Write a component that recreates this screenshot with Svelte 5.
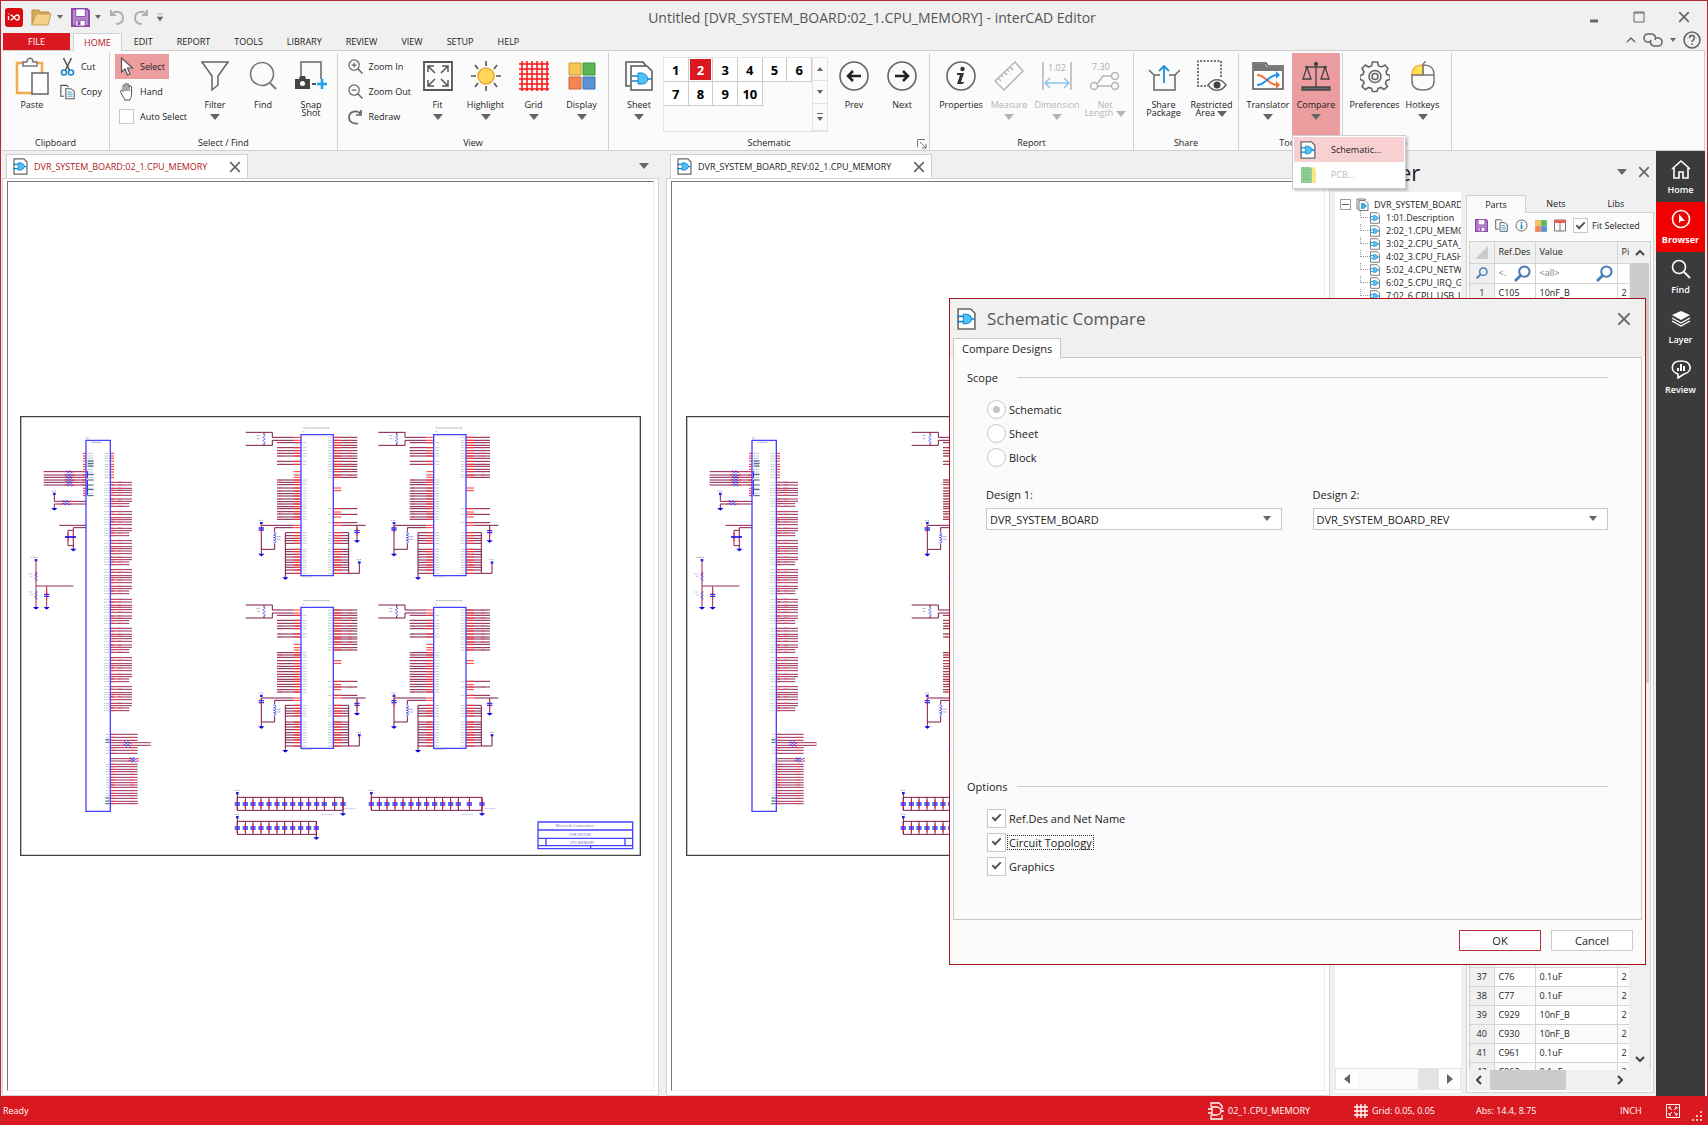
<script>
  const menuTabs = ['HOME', 'EDIT', 'REPORT', 'TOOLS', 'LIBRARY', 'REVIEW', 'VIEW', 'SETUP', 'HELP'];
  const sheets = [1, 2, 3, 4, 5, 6, 7, 8, 9, 10];

  const treeItems = [
    '1:01.Description',
    '2:02_1.CPU_MEMORY',
    '3:02_2.CPU_SATA_PCI',
    '4:02_3.CPU_FLASH',
    '5:02_4.CPU_NETWORK',
    '6:02_5.CPU_IRQ_GPIO',
    '7:02_6.CPU_USB_UART'
  ];

  const parts = {
    1: ['C105', '10nF_B'],
    37: ['C76', '0.1uF'],
    38: ['C77', '0.1uF'],
    39: ['C929', '10nF_B'],
    40: ['C930', '10nF_B'],
    41: ['C961', '0.1uF'],
    42: ['C962', '0.1uF']
  };
  const rows = Array.from({ length: 42 }, (_, i) => i + 1);

  const sideItems = ['Home', 'Browser', 'Find', 'Layer', 'Review'];

  let sheet = $state(2);
  let scope = $state('Schematic');
  let options = $state([
    { name: 'Ref.Des and Net Name', on: true },
    { name: 'Circuit Topology', on: true },
    { name: 'Graphics', on: true }
  ]);

  // schematic drawing, three units per pixel
  const busGroups = [199, 287, 374, 461, 550, 637, 725, 812];
  const busWires = [0, 8, 18, 24, 31, 39, 50, 57, 64, 72];
  const lowWires = [955, 964, 973, 995, 1003, 1012, 1045, 1052, 1060, 1067, 1075, 1084, 1092, 1100, 1107, 1114, 1124, 1132, 1139, 1147, 1156, 1163];
  const topPins = [112, 120, 127, 135, 145, 152, 160, 168, 177, 185];
  const leftWires = [167, 177, 184, 192, 199, 207];
  const memLeft = [83, 98, 107, 115, 123, 139, 148, 195, 202, 209, 219, 228, 236, 243, 252, 260, 267, 275, 281, 290, 297, 306, 313];
  const memRight = [67, 76, 83, 91, 98, 107, 115, 123, 130, 139, 148, 154, 163, 170, 180, 187, 281, 298, 323];
  const memStubs = [219, 227, 291, 306];
  const memPower = [353, 362, 370, 377, 385, 403, 410, 418, 426, 435, 442, 450, 457, 465, 475];
  const memChips = [[630, -3], [1028, -3], [630, 515], [1028, 515]];
  const banks = [
    { x: 652, y: 1144, w: 317, caps: [0, 24, 47, 71, 95, 119, 142, 166, 190, 214, 238, 261, 292, 317] },
    { x: 1054, y: 1144, w: 332, caps: [0, 24, 47, 71, 95, 119, 142, 166, 190, 214, 238, 261, 294, 332] },
    { x: 652, y: 1216, w: 237, caps: [0, 24, 47, 71, 95, 119, 142, 166, 190, 214, 237] }
  ];

  const hlines = (ys, x1, x2) => ys.map((y) => `M${x1} ${y}H${x2}`).join('');
</script>

{#snippet sheetIcon(w, h)}
  <svg width={w} height={h} viewBox="0 0 18 21" fill="none">
    <path d="M1 1h12l4 4v15H1z" fill="#fff" stroke="#666" stroke-width="1.5" />
    <path d="M0 8h6M0 13h6M13 10.500h4" stroke="#1787c8" stroke-width="1.500" />
    <path d="M6 6h2.500c3 0 5 2 5.500 4.500-.500 2.500-2.500 4.500-5.500 4.500H6z" fill="#4fc3f7" stroke="#1787c8" />
  </svg>
{/snippet}

{#snippet arrow()}
  <svg class="arrow" width="10" height="6" viewBox="0 0 10 6"><path d="M0 0h10L5 6z" fill="currentColor" /></svg>
{/snippet}

{#snippet smallArrow()}
  <svg width="6" height="4" viewBox="0 0 6 4"><path d="M0 0h6L3 4z" fill="#666" /></svg>
{/snippet}

{#snippet cross(size)}
  <svg width={size} height={size} viewBox="0 0 10 10"><path d="M1 1l8 8M9 1L1 9" stroke="#666" stroke-width="1.400" /></svg>
{/snippet}

{#snippet floppy(size)}
  <svg width={size} height={size} viewBox="0 0 20 20">
    <path d="M1 1h16l2 2v16H1z" fill="#b985d0" stroke="#8a4aa8" stroke-width="2" />
    <path d="M5 1h10v8H5zM5 13h10v6H5z" fill="#fff" stroke="#8a4aa8" />
    <path d="M7 14h3v4H7z" fill="#8a4aa8" />
  </svg>
{/snippet}

{#snippet copyIcon(size)}
  <svg width={size} height={size} viewBox="0 0 18 18" fill="none">
    <path d="M5 14H1V1h7l2 2" stroke="#555" stroke-width="1.300" />
    <path d="M7 5h6l4 3v9H7z" fill="#fff" stroke="#555" stroke-width="1.300" />
    <path d="M9 9h5M9 11.500h6M9 14h6" stroke="#1787c8" />
  </svg>
{/snippet}

{#snippet colorTiles(size)}
  <svg width={size} height={size} viewBox="0 0 28 28">
    <path d="M1 1h12v12H1z" fill="#f4c755" stroke="#c79d33" />
    <path d="M15 1h12v12H15z" fill="#5cb658" stroke="#3d9339" />
    <path d="M1 15h12v12H1z" fill="#f58553" stroke="#cc6234" />
    <path d="M15 15h12v12H15z" fill="#5a93d4" stroke="#3b72b0" />
  </svg>
{/snippet}

{#snippet magnifier(size, color, sign)}
  <svg width={size} height={size} viewBox="0 0 16 16" fill="none" stroke={color} stroke-width="1.300">
    <circle cx="6.500" cy="6.500" r="5.500" /><path d="M10.500 10.500l5 5" stroke-width="1.600" />
    {#if sign}<path d={sign === '+' ? 'M4 6.500h5M6.500 4v5' : 'M4 6.500h5'} />{/if}
  </svg>
{/snippet}

{#snippet blueLens(size)}
  <svg width={size} height={size} viewBox="0 0 18 18" fill="none" stroke="#4a7db8">
    <circle cx="11" cy="7" r="5.500" stroke-width="2.200" /><path d="M7 11l-6 6" stroke-width="3" />
  </svg>
{/snippet}

{#snippet ground(x, y)}
  <path d="M{x - 9} {y - 4}h18l-6 6h-2l-1 4-1-4h-2z" fill="#00e" />
{/snippet}

{#snippet power(x, y)}
  <path d="M{x - 4} {y - 4}h8v7h-8z" fill="#22e" />
  <path d="M{x - 8} {y - 9}h14" stroke="#99c" stroke-width="3" stroke-dasharray="3 2" />
{/snippet}

{#snippet cap(x, y)}
  <path d="M{x} {y - 12}v24" stroke="#f22" stroke-width="3" />
  <path d="M{x - 8} {y - 3}h16M{x - 8} {y + 3}h16" stroke="#33e" stroke-width="4" />
{/snippet}

{#snippet zigzag(x, y)}
  <path d="M{x - 16} {y}h6m20 0h8" stroke="#f33" stroke-width="3" />
  <path d="M{x - 10} {y}l3-4 5 8 5-8 5 8 3-4" stroke="#33e" stroke-width="2" fill="none" />
{/snippet}

{#snippet vzigzag(x, y)}
  <path d="M{x} {y - 13}l4 3-8 5 8 5-8 5 8 5-4 3" stroke="#44e" stroke-width="2" fill="none" />
{/snippet}

{#snippet schematic()}
  <svg class="schematic" width="621" height="440" viewBox="0 0 1863 1320" fill="none" stroke-width="3">
    <path d="M2 2h1859v1316H2z" fill="#fff" stroke="#444" stroke-width="4" />

    <!-- processor -->
    {#each busGroups as top}
      <path d={hlines(busWires.slice(0, 8).map((y) => y + top), 271, 336)} stroke="#9c2c5c" />
      <path d={hlines(busWires.slice(8).map((y) => y + top), 271, 328)} stroke="#9c2c5c" />
      <path d={hlines(busWires.map((y) => y + top), 271, 282)} stroke="#f33" />
      <path d={hlines(busWires.map((y) => y + top), 252, 268)} stroke="#c0ccdc" stroke-dasharray="5 1" />
      <path d={hlines(busWires.map((y) => y + top - 1), 293, 305)} stroke="#d55" stroke-width="2" />
    {/each}
    <path d={hlines(lowWires, 271, 353)} stroke="#9c2c5c" />
    <path d={hlines([980, 988], 271, 392)} stroke="#9c2c5c" />
    <path d={hlines([1028, 1035], 271, 345)} stroke="#9c2c5c" />
    <path d={hlines(lowWires, 271, 283)} stroke="#f33" />
    <path d={hlines(lowWires, 332, 342)} stroke="#e44" stroke-width="2" />
    <path d={hlines(lowWires, 258, 268)} stroke="#c0ccdc" />
    <path d={hlines([971, 979, 1146, 1155, 1163], 256, 269)} stroke="#368" />
    {@render zigzag(321, 980)}{@render zigzag(321, 988)}
    {@render zigzag(339, 1028)}{@render zigzag(339, 1035)}
    <path d={hlines(topPins, 271, 282) + hlines([...topPins.slice(0, 7), 217, 225, 232, 239], 189, 198)} stroke="#f22" />
    <path d={hlines([...topPins, 217, 232], 202, 220) + hlines(topPins, 254, 268)} stroke="#b0bccc" stroke-dasharray="5 1" />
    <path d={hlines([135, 142, 150, 175, 192, 207, 221, 239], 203, 221)} stroke="#357" />
    <path d={hlines(leftWires, 71, 198)} stroke="#8c1c50" />
    <path d={hlines(leftWires, 186, 198)} stroke="#f33" />
    {#each leftWires as y}{@render zigzag(147, y)}{/each}
    <path d="M103 236v20h95M103 278v-14h95" stroke="#8c1c50" />
    {@render zigzag(138, 256)}{@render zigzag(138, 264)}
    {@render power(103, 234)}{@render ground(103, 280)}
    <path d="M118 328h80M198 335h-38v65M160 343h-16v46h16" stroke="#8c1c50" />
    <path d="M144 350v26M160 350v26" stroke="#f33" />
    <path d="M135 363h33" stroke="#11e" stroke-width="5" />
    {@render ground(160, 402)}
    <path d="M48 435v140M48 510h112M80 510v65" stroke="#9c2c5c" />
    <path d="M48 466v12M80 520v12" stroke="#f33" />
    {@render power(48, 433)}
    {@render vzigzag(48, 482)}{@render vzigzag(48, 538)}
    {@render cap(80, 538)}
    {@render ground(48, 577)}{@render ground(80, 577)}
    <path d="M25 474h12M30 481h8M25 528h12M30 536h8M30 424h14" stroke="#aad" stroke-width="2" />
    <path d="M198 73h73v1113h-73z" stroke="#44f" stroke-width="4" />
    <path d="M215 79h30M198 66h8" stroke="#99d" stroke-dasharray="5 1" />
    <path d="M202 165v22M202 192v46" stroke="#11e" />

    <!-- memory chips -->
    {#each memChips as [x, y]}
      <g transform="translate({x} {y})">
        <path d={hlines(memLeft, 141, 213) + hlines(memRight, 310, 382) + hlines(memPower, 166, 213) + hlines(memPower, 310, 356)} stroke="#7c1848" />
        <path d={hlines([67, 76, ...memLeft, 170, 180, 187, 331, 338, ...memPower], 191, 213)} stroke="#f33" />
        <path d={hlines([...memRight, ...memStubs, 331, ...memPower], 310, 334)} stroke="#f33" />
        <path d={hlines(memLeft, 146, 155) + hlines(memRight, 355, 366)} stroke="#d44" stroke-width="2" />
        <path d={hlines([...memLeft, ...memPower], 218, 230) + hlines([...memRight, ...memPower], 294, 306)} stroke="#c0ccdc" />
        <path d="M47 52h80v15h64M47 91h80V76h64M102 52v8M102 84v7" stroke="#7c1848" />
        <path d="M191 331H94v88M191 338h-57v12M134 386v17H94M166 353v138M356 353v122h32v-32M334 331h73M381 331v48" stroke="#7c1848" />
        {@render vzigzag(102, 72)}
        <path d="M131 352c8 0 8 8 0 8 8 0 8 8 0 8 8 0 8 8 0 8 8 0 8 8 0 8" stroke="#33e" />
        <path d="M140 365h12M140 373h12M79 62h10M81 71h8" stroke="#aad" />
        {@render cap(94, 342)}{@render cap(381, 350)}
        {@render power(94, 325)}{@render power(388, 443)}
        {@render ground(94, 420)}{@render ground(166, 491)}{@render ground(381, 380)}
        <path d="M213 59h97v423h-97z" stroke="#44f" stroke-width="4" />
        <path d="M220 39h80" stroke="#aaa" stroke-dasharray="6 2" />
        <path d="M217 50h7M213 485h34" stroke="#aac" stroke-width="2" />
      </g>
    {/each}

    <!-- decoupling capacitors -->
    {#each banks as b}
      <path d="M{b.x} {b.y - 12}v12h{b.w}v50M{b.x} {b.y}v39h{b.w}" stroke="#7c1848" />
      {#each b.caps as c}
        <path d="M{b.x + c} {b.y}v39" stroke="#7c1848" />
        {@render cap(b.x + c, b.y + 20)}
      {/each}
      {@render power(b.x, b.y - 12)}
      {@render ground(b.x + b.w, b.y + 52)}
    {/each}
    <path d="M905 1195h35M972 1178h35M1325 1195h35M1392 1178h35" stroke="#aad" stroke-width="2" stroke-dasharray="6 1" />

    <!-- title block -->
    <path d="M1554 1218h284v80h-284zM1554 1242h284M1554 1267h284M1554 1289h284M1578 1267v22M1815 1267v22M1712 1289v9" stroke="#44f" stroke-width="4" />
    <g class="block-text">
      <text x="1664" y="1234">Microsoft Corporation</text>
      <text x="1680" y="1260">DVR SYSTEM</text>
      <text x="1686" y="1284">CPU MEMORY</text>
    </g>
  </svg>
{/snippet}

<div class="window">
  <header class="titlebar">
    <div class="quick">
      <svg width="18" height="19" viewBox="0 0 18 19">
        <rect width="18" height="19" rx="3" fill="#d90b12" />
        <path d="M3.500 8v4M3.500 5.500v1M5.500 12c3 0 4-5 6.500-5 3 0 3 5 0 5-2.500 0-3.500-5-6.500-5" fill="none" stroke="#fff" stroke-width="1.300" />
      </svg>
      <button aria-label="Open">
        <svg width="21" height="18" viewBox="0 0 21 18">
          <path d="M1 17V2h7l2 2h8v3" fill="#d9a95c" stroke="#b98a45" />
          <path d="M1 17l4-11h15l-3 11z" fill="#f5d08b" stroke="#c79a52" />
        </svg>
        {@render smallArrow()}
      </button>
      <button aria-label="Save">{@render floppy(19)}{@render smallArrow()}</button>
      <button aria-label="Undo">
        <svg width="16" height="16" viewBox="0 0 16 16" fill="none" stroke="#b0b0b0" stroke-width="2"><path d="M2 1v5h5M2 6c3-5 12-4 12 3 0 4-3 6-7 6" /></svg>
      </button>
      <button aria-label="Redo">
        <svg width="16" height="16" viewBox="0 0 16 16" fill="none" stroke="#b0b0b0" stroke-width="2"><path d="M14 1v5H9M14 6C11 1 2 2 2 9c0 4 3 6 7 6" /></svg>
      </button>
      <button aria-label="Customize">
        <svg width="6" height="8" viewBox="0 0 6 8"><path d="M0 1h6M0 4h6L3 8z" fill="#666" stroke="#666" stroke-width=".5" /></svg>
      </button>
    </div>
    <h1>Untitled [DVR_SYSTEM_BOARD:02_1.CPU_MEMORY] - interCAD Editor</h1>
    <div class="winbuttons">
      <button aria-label="Minimize"><svg width="12" height="12" viewBox="0 0 12 12"><path d="M2 10h8" stroke="#666" stroke-width="3" /></svg></button>
      <button aria-label="Maximize"><svg width="12" height="12" viewBox="0 0 12 12"><path d="M1 1h10v10H1zM1 2h10" fill="none" stroke="#666" /></svg></button>
      <button aria-label="Close">{@render cross(12)}</button>
    </div>
  </header>

  <nav class="tabs">
    <button class="file">FILE</button>
    {#each menuTabs as tab}
      <button class:active={tab === 'HOME'}>{tab}</button>
    {/each}
    <div class="tab-tools">
      <svg width="10" height="6" viewBox="0 0 10 6" fill="none" stroke="#666" stroke-width="1.400"><path d="M1 5l4-4 4 4" /></svg>
      <svg width="20" height="14" viewBox="0 0 20 14" fill="none" stroke="#666" stroke-width="1.600">
        <path d="M7 9H5a4 4 0 010-8h4a4 4 0 013 6" /><path d="M13 5h2a4 4 0 010 8h-4a4 4 0 01-3-6" />
      </svg>
      {@render smallArrow()}
      <svg width="18" height="18" viewBox="0 0 18 18" fill="none" stroke="#666" stroke-width="1.600">
        <circle cx="9" cy="9" r="8" /><path d="M6.500 7c0-3.500 5-3.500 5 0 0 1.800-2.500 1.800-2.500 4M9 12.500v1.500" />
      </svg>
    </div>
  </nav>

  <div class="ribbon">
    <section class="group">
      <div class="tools">
        <button class="big">
          <svg width="34" height="38" viewBox="0 0 34 38" fill="none">
            <path d="M2 6h25v30H2z" fill="#fff" stroke="#f0ac4e" stroke-width="2.500" />
            <path d="M8 9V5h4c0-5 6-5 6 0h4v4z" fill="#fff" stroke="#777" stroke-width="1.500" />
            <path d="M17 16h16v21H17z" fill="#fff" stroke="#666" stroke-width="1.500" />
          </svg>
          <span>Paste</span>
        </button>
        <div class="smalls">
          <button class="small">
            <svg width="14" height="19" viewBox="0 0 14 19" fill="none">
              <path d="M3 1l6 12M11 1L5 13" stroke="#555" stroke-width="1.600" />
              <circle cx="3.500" cy="15.500" r="2.500" stroke="#1a86c8" stroke-width="1.600" /><circle cx="10.500" cy="15.500" r="2.500" stroke="#1a86c8" stroke-width="1.600" />
            </svg>Cut
          </button>
          <button class="small">{@render copyIcon(16)}Copy</button>
        </div>
      </div>
      <h2>Clipboard</h2>
    </section>

    <section class="group">
      <div class="tools">
        <div class="smalls select-col">
          <button class="small on">
            <svg width="14" height="19" viewBox="0 0 14 19"><path d="M2 1v14l3.500-3 2.500 6 2.500-1-2.500-6H13z" fill="#fff" stroke="#555" stroke-width="1.200" /></svg>Select
          </button>
          <button class="small">
            <svg width="14" height="19" viewBox="0 0 14 19"><path d="M3 14L1 9.500c0-1.500 1.500-1.500 2.500 0V4c0-1.500 2-1.500 2 0V2.500c0-1.500 2-1.500 2 0V3c0-1.500 2-1.500 2 0v2c0-1.500 2.500-1.500 2.500 0v7c0 3-1 4-1.500 6H5c0-2-1-2.500-2-4zM5.500 4v5M7.500 3v6M9.500 4v5" fill="#fff" stroke="#555" /></svg>Hand
          </button>
          <label class="small"><input type="checkbox" class="check" />Auto Select</label>
        </div>
        <button class="big">
          <svg width="28" height="30" viewBox="0 0 28 30" fill="none" stroke="#666" stroke-width="1.500"><path d="M1 1h26L17 15v9l-6 5V15z" /></svg>
          <span>Filter</span>{@render arrow()}
        </button>
        <button class="big">
          <svg width="28" height="30" viewBox="0 0 28 30" fill="none" stroke="#777" stroke-width="1.600"><circle cx="13" cy="13" r="11.500" /><path d="M21 22l6 6" stroke-width="2" /></svg>
          <span>Find</span>
        </button>
        <button class="big">
          <svg width="32" height="30" viewBox="0 0 32 30" fill="none">
            <path d="M6 17V1h20v17" stroke="#666" stroke-width="1.500" />
            <path d="M0 18h4l1-3h5l1 3h4v10H0z" fill="#444" /><circle cx="7.500" cy="22.500" r="2.500" fill="#fff" />
            <path d="M17 23h4" stroke="#555" stroke-width="2" /><path d="M27 18v10M22 23h10" stroke="#1e9fe8" stroke-width="2.500" />
          </svg>
          <span>Snap<br />Shot</span>
        </button>
      </div>
      <h2>Select / Find</h2>
    </section>

    <section class="group">
      <div class="tools">
        <div class="smalls view-col">
          <button class="small">{@render magnifier(15, '#666', '+')}Zoom In</button>
          <button class="small">{@render magnifier(15, '#666', '-')}Zoom Out</button>
          <button class="small"><svg width="15" height="16" viewBox="0 0 15 16" fill="none" stroke="#666" stroke-width="1.700"><path d="M13 1v5H8M13 6C10 0 1 2 1 8.500 1 13 5 15 10 14.500" /></svg>Redraw</button>
        </div>
        <button class="big">
          <svg width="30" height="30" viewBox="0 0 30 30" fill="none" stroke="#555" stroke-width="1.800">
            <path d="M1 1h28v28H1z" /><path d="M12 12L5 5m0 6V5h6M18 12l7-7m-6 0h6v6M12 18l-7 7m0-6v6h6M18 18l7 7m-6 0h6v-6" stroke-width="1.500" />
          </svg>
          <span>Fit</span>{@render arrow()}
        </button>
        <button class="big">
          <svg width="30" height="30" viewBox="0 0 30 30">
            <path d="M15 0v5M15 25v5M0 15h5M25 15h5M4 4l3 4M26 4l-3 4M4 26l3-4M26 26l-3-4" stroke="#555" stroke-width="1.600" />
            <circle cx="15" cy="15" r="8" fill="#ffd95a" stroke="#f0a93a" stroke-width="1.600" />
          </svg>
          <span>Highlight</span>{@render arrow()}
        </button>
        <button class="big">
          <svg width="30" height="30" viewBox="0 0 30 30"><path d="M3 0v30M8 0v30M13 0v30M18 0v30M23 0v30M28 0v30M0 3h30M0 8h30M0 13h30M0 18h30M0 23h30M0 28h30" stroke="#fa1414" stroke-width="1.500" /></svg>
          <span>Grid</span>{@render arrow()}
        </button>
        <button class="big">{@render colorTiles(28)}<span>Display</span>{@render arrow()}</button>
      </div>
      <h2>View</h2>
    </section>

    <section class="group">
      <div class="tools">
        <button class="big">
          <svg width="28" height="30" viewBox="0 0 28 30" fill="none">
            <path d="M5 25H1V1h17l3 4" stroke="#555" stroke-width="1.500" />
            <path d="M6 5h16l5 5v19H6z" fill="#fff" stroke="#555" stroke-width="1.500" />
            <path d="M7 15h7M7 20h7M22 18h5" stroke="#1787c8" stroke-width="1.500" />
            <path d="M13 12h4c4 1 5 3 6 6-1 3-2 5-6 5h-4z" fill="#4fc3f7" stroke="#1787c8" />
          </svg>
          <span>Sheet</span>{@render arrow()}
        </button>
        <div class="gallery">
          <div class="cells">
            {#each sheets as n}
              <button class:current={n === sheet} onclick={() => (sheet = n)}>{n}</button>
            {/each}
          </div>
          <div class="scrollers">
            <button aria-label="Up"><svg width="6" height="4" viewBox="0 0 6 4"><path d="M0 4h6L3 0z" fill="#666" /></svg></button>
            <button aria-label="Down">{@render smallArrow()}</button>
            <button aria-label="More"><svg width="6" height="8" viewBox="0 0 6 8"><path d="M0 0h6v1H0zM0 4h6L3 8z" fill="#666" /></svg></button>
          </div>
        </div>
        <button class="big">
          <svg width="30" height="30" viewBox="0 0 30 30" fill="none" stroke="#666" stroke-width="1.600"><circle cx="15" cy="15" r="14" /><path d="M22 15H9m5-5l-5 5 5 5" stroke="#222" stroke-width="2.500" /></svg>
          <span>Prev</span>
        </button>
        <button class="big">
          <svg width="30" height="30" viewBox="0 0 30 30" fill="none" stroke="#666" stroke-width="1.600"><circle cx="15" cy="15" r="14" /><path d="M8 15h13m-5-5l5 5-5 5" stroke="#222" stroke-width="2.500" /></svg>
          <span>Next</span>
        </button>
      </div>
      <h2>Schematic</h2>
      <svg class="launcher" width="10" height="10" viewBox="0 0 10 10" fill="none" stroke="#777"><path d="M.5 8V.5H8M3 3l6 6M9 5v4H5" /></svg>
    </section>

    <section class="group">
      <div class="tools">
        <button class="big">
          <svg width="30" height="30" viewBox="0 0 30 30"><circle cx="15" cy="15" r="14" fill="none" stroke="#666" stroke-width="1.600" /><circle cx="16.500" cy="8" r="2.200" fill="#333" /><path d="M11 12h7l-3 9h3l-1 2h-6l3-9h-3z" fill="#333" /></svg>
          <span>Properties</span>
        </button>
        <button class="big" disabled>
          <svg width="30" height="30" viewBox="0 0 30 30" fill="none" stroke="#b5b5b5" stroke-width="1.500"><path d="M1 20L21 1l8 9L10 29zM4 17l3 3M7 14l2 2M10 11l3 3M13 8.500l2 2M16 6l3 3" /></svg>
          <span>Measure</span>{@render arrow()}
        </button>
        <button class="big" disabled>
          <svg width="30" height="30" viewBox="0 0 30 30" fill="none">
            <path d="M1 1v28M29 1v28" stroke="#b5b5b5" stroke-width="1.500" /><path d="M3 22h24M8 17l-5 5 5 5M22 17l5 5-5 5" stroke="#8ac4e8" stroke-width="1.500" />
            <text x="15" y="10" class="digits">1.02</text>
          </svg>
          <span>Dimension</span>{@render arrow()}
        </button>
        <button class="big" disabled>
          <svg width="32" height="30" viewBox="0 0 32 30" fill="none" stroke="#b5b5b5" stroke-width="1.500">
            <circle cx="5" cy="25" r="3.500" /><circle cx="26" cy="15" r="3.500" /><circle cx="26" cy="25" r="3.500" /><path d="M8 23l6-8h8M9 25h13" />
            <text x="12" y="9" class="digits">7.30</text>
          </svg>
          <span>Net<br />Length {@render arrow()}</span>
        </button>
      </div>
      <h2>Report</h2>
    </section>

    <section class="group">
      <div class="tools">
        <button class="big">
          <svg width="32" height="30" viewBox="0 0 32 30" fill="none" stroke="#666" stroke-width="1.500"><path d="M1 9l5 5v15h21V14l5-5M6 14h6M21 14h6" /><path d="M16 22V5m-5 5l5-5 5 5" stroke="#1e8fd0" stroke-width="1.800" /></svg>
          <span>Share<br />Package</span>
        </button>
        <button class="big">
          <svg width="30" height="32" viewBox="0 0 30 32" fill="none">
            <path d="M24 17V1H1v25h10" stroke="#444" stroke-width="1.500" stroke-dasharray="2 1.500" />
            <path d="M11 25c5-7 13-7 18 0-5 7-13 7-18 0z" fill="#fff" stroke="#666" stroke-width="1.500" /><circle cx="20" cy="25" r="3.500" fill="#444" />
          </svg>
          <span>Restricted<br />Area {@render arrow()}</span>
        </button>
      </div>
      <h2>Share</h2>
    </section>

    <section class="group">
      <div class="tools">
        <button class="big">
          <svg width="32" height="30" viewBox="0 0 32 30" fill="none">
            <path d="M1 28V2h13l2 3h15v23z" fill="#fff" stroke="#555" stroke-width="1.500" /><path d="M2 3h11l2 3h15v4H2z" fill="#777" />
            <path d="M5 14c9 0 11 10 20 10" stroke="#f37132" stroke-width="1.800" /><path d="M5 24c9 0 11-10 20-10" stroke="#1e95e8" stroke-width="1.800" />
            <path d="M24 20l4 4-4 4z" fill="#f37132" /><path d="M24 10l4 4-4 4z" fill="#1e95e8" />
          </svg>
          <span>Translator</span>{@render arrow()}
        </button>
        <div class="dropdown">
          <button class="big on">
            <svg width="30" height="30" viewBox="0 0 30 30" fill="none" stroke="#444" stroke-width="1.300">
              <path d="M15 1v25M4 6h22M6 6L2 18h8zM24 6l-4 12h8z" /><circle cx="15" cy="3" r="1.500" fill="#444" /><path d="M1 26h28v3H1z" fill="#666" />
            </svg>
            <span>Compare</span>{@render arrow()}
          </button>
          <div class="menu">
            <button class="hover">{@render sheetIcon(16, 18)}Schematic...</button>
            <button disabled>
              <svg width="16" height="18" viewBox="0 0 16 18"><path d="M7 1h6l3 3v13H7z" fill="#f7e884" /><path d="M1 1h9l2 2v14H1z" fill="#8fcf93" /><path d="M3 4h7M3 7h7M3 10h7M3 13h7" stroke="#7bbd80" /></svg>PCB...
            </button>
          </div>
        </div>
      </div>
      <h2>Tools</h2>
    </section>

    <section class="group">
      <div class="tools">
        <button class="big">
          <svg width="30" height="30" viewBox="0 0 30 30" fill="none" stroke="#666" stroke-width="1.600">
            <path d="M12.500 1h5l1 4 3 1 3.500-2 3 3.500-2 3.500 1 2.500 3 1v4l-3.500 1-1 3 2 3-3.500 3-3-2-3 1-1 3h-4.500l-1-3-3-1-3 2-3.500-3 2-3.500-1-2.500-3-1v-4l3-1 1-3-2-3 3.500-3.500L8.500 6l3-1z" />
            <circle cx="15" cy="15.500" r="6" /><circle cx="15" cy="15.500" r="3" />
          </svg>
          <span>Preferences</span>
        </button>
        <button class="big">
          <svg width="26" height="32" viewBox="0 0 26 32" fill="none" stroke="#777" stroke-width="1.500">
            <path d="M2 15c0-7 3-10 11-10v10z" fill="#ffe14d" stroke="#f0ac4e" />
            <path d="M13 5c8 0 11 3 11 10v6c0 6-3 9-11 9S2 27 2 21v-6h22M13 5c-1-2 3-2 2-4M13 5v10" />
          </svg>
          <span>Hotkeys</span>{@render arrow()}
        </button>
      </div>
      <h2>Help</h2>
    </section>
  </div>

  <main>
    <section class="doc">
      <div class="doctabs">
        <div class="doctab active">{@render sheetIcon(15, 17)}<span>DVR_SYSTEM_BOARD:02_1.CPU_MEMORY</span><button aria-label="Close tab">{@render cross(12)}</button></div>
        <button class="doclist" aria-label="Open documents">{@render arrow()}</button>
      </div>
      <div class="frame"><div class="canvas">{@render schematic()}</div></div>
    </section>

    <section class="doc">
      <div class="doctabs">
        <div class="doctab">{@render sheetIcon(15, 17)}<span>DVR_SYSTEM_BOARD_REV:02_1.CPU_MEMORY</span><button aria-label="Close tab">{@render cross(12)}</button></div>
      </div>
      <div class="frame"><div class="canvas">{@render schematic()}</div></div>
    </section>

    <aside class="browser">
      <div class="browser-head">
        <h2>Browser</h2>
        {@render arrow()}
        <button aria-label="Close browser">{@render cross(12)}</button>
      </div>
      <div class="browser-body">
        <div class="tree">
          <ul>
            <li class="root">
              <svg width="11" height="11" viewBox="0 0 11 11"><path d="M.5.5h10v10H.5z" fill="#fff" stroke="#999" /><path d="M2 5.500h7" stroke="#468" /></svg>
              <svg width="13" height="13" viewBox="0 0 13 13" fill="none"><path d="M2 11H1V1h8l1 1M3 2.500h6l3 3v7H3z" fill="#fff" stroke="#777" /><path d="M5 5h3l3 3-3 3H5z" fill="#3fa9e0" /></svg>
              DVR_SYSTEM_BOARD
            </li>
            {#each treeItems as item}
              <li>{@render sheetIcon(10, 12)}{item}</li>
            {/each}
          </ul>
          <div class="hscroll">
            <button aria-label="Scroll left"><svg width="6" height="10" viewBox="0 0 6 10"><path d="M6 0v10L0 5z" fill="#666" /></svg></button>
            <div class="track"><div class="thumb"></div></div>
            <button aria-label="Scroll right"><svg width="6" height="10" viewBox="0 0 6 10"><path d="M0 0v10l6-5z" fill="#666" /></svg></button>
          </div>
        </div>

        <div class="parts">
          <div class="part-tabs">
            <button class="active">Parts</button>
            <button>Nets</button>
            <button>Libs</button>
          </div>
          <div class="part-body">
            <div class="part-tools">
              {@render floppy(13)}
              {@render copyIcon(13)}
              <svg width="13" height="13" viewBox="0 0 13 13" fill="none"><circle cx="6.500" cy="6.500" r="5.500" stroke="#666" /><path d="M6.500 3v1.500M6.500 5.500V10" stroke="#1787c8" stroke-width="1.600" /></svg>
              {@render colorTiles(12)}
              <svg width="12" height="13" viewBox="0 0 12 13" fill="none"><path d="M.5 1h11v11H.5zM6 4v8" stroke="#777" /><path d="M0 1h12v3H0z" fill="#f05a5a" /></svg>
              <label><input type="checkbox" class="check" checked />Fit Selected</label>
            </div>
            <div class="grid">
              <div class="grid-clip">
                <table>
                  <thead>
                    <tr><th class="num"><svg width="13" height="13" viewBox="0 0 13 13"><path d="M13 0v13H0z" fill="#ccc" /></svg></th><th>Ref.Des</th><th>Value</th><th>Pi</th></tr>
                  </thead>
                  <tbody>
                    <tr class="filter">
                      <td class="num">{@render blueLens(12)}</td>
                      <td><div>&lt;.{@render blueLens(17)}</div></td>
                      <td><div>&lt;all&gt;{@render blueLens(17)}</div></td>
                      <td></td>
                    </tr>
                    {#each rows as n}
                      <tr class:alt={n % 2 === 0}>
                        <td class="num">{parts[n] ? n : ''}</td>
                        <td>{parts[n]?.[0] ?? ''}</td>
                        <td>{parts[n]?.[1] ?? ''}</td>
                        <td>{parts[n] ? 2 : ''}</td>
                      </tr>
                    {/each}
                  </tbody>
                </table>
              </div>
              <div class="vscroll">
                <svg width="10" height="6" viewBox="0 0 10 6" fill="none" stroke="#444" stroke-width="2"><path d="M1 5l4-4 4 4" /></svg>
                <div class="vthumb"></div>
                <svg width="10" height="6" viewBox="0 0 10 6" fill="none" stroke="#444" stroke-width="2"><path d="M1 1l4 4 4-4" /></svg>
              </div>
            </div>
            <div class="gscroll">
              <svg width="6" height="10" viewBox="0 0 6 10" fill="none" stroke="#444" stroke-width="2"><path d="M5 1L1 5l4 4" /></svg>
              <div class="gtrack"><div class="gthumb"></div></div>
              <svg width="6" height="10" viewBox="0 0 6 10" fill="none" stroke="#444" stroke-width="2"><path d="M1 1l4 4-4 4" /></svg>
            </div>
          </div>
        </div>
      </div>
    </aside>

    <nav class="side">
      {#each sideItems as item}
        <button class:active={item === 'Browser'}>
          <svg width="22" height="20" viewBox="0 0 22 20" fill="none" stroke="#fff" stroke-width="1.600">
            {#if item === 'Home'}
              <path d="M2 10l9-8 9 8M4 9v10h5v-6h4v6h5V9" />
            {:else if item === 'Browser'}
              <circle cx="11" cy="10" r="8.500" /><path d="M9 5v9l2-2h4z" fill="#fff" stroke="none" />
            {:else if item === 'Find'}
              <circle cx="9" cy="8" r="6.500" /><path d="M14 13l6 6" stroke-width="2" />
            {:else if item === 'Layer'}
              <path d="M11 2l9 4-9 5-9-5z" fill="#fff" stroke="none" /><path d="M2 9l9 5 9-5M2 12l9 5 9-5" stroke-width="1.400" />
            {:else}
              <path d="M8 15c-8-2-8-13 3-13s12 11 3 13l-6 4z" /><path d="M8 12V9M11 12V5M14 12V7" stroke-width="2" />
            {/if}
          </svg>
          {item}
        </button>
      {/each}
    </nav>
  </main>

  <footer>
    <span class="ready">Ready</span>
    <span class="status page">
      <svg width="16" height="18" viewBox="0 0 16 18" fill="none" stroke="#fff" stroke-width="1.300"><path d="M3 5V1h8l3 3v3M3 13v4h11v-4M0 7h4M0 11h4M13 9h3M4 5h4c3 0 5 2 5 4s-2 4-5 4H4z" /></svg>
      02_1.CPU_MEMORY
    </span>
    <span class="status coords">
      <svg width="14" height="14" viewBox="0 0 14 14"><path d="M3 0v14M7 0v14M11 0v14M0 3h14M0 7h14M0 11h14" stroke="#fff" stroke-width="1.300" /></svg>
      Grid: 0.05, 0.05
    </span>
    <span class="status abs">Abs: 14.4, 8.75</span>
    <span class="status unit">INCH</span>
    <svg width="14" height="14" viewBox="0 0 14 14" fill="none" stroke="#fff"><path d="M.5.5h13v13H.5zM3 3l3 3M11 3L8 6M3 11l3-3M11 11L8 8M3 5V3h2M9 3h2v2M3 9v2h2M9 11h2V9" /></svg>
    <svg class="grip" width="10" height="10" viewBox="0 0 10 10" fill="#f3c0c0"><path d="M8 0h2v2H8zM8 4h2v2H8zM8 8h2v2H8zM4 4h2v2H4zM4 8h2v2H4zM0 8h2v2H0z" /></svg>
  </footer>

  <div class="dialog" role="dialog" aria-labelledby="dialog-title">
    <header>
      {@render sheetIcon(19, 22)}
      <h2 id="dialog-title">Schematic Compare</h2>
      <button aria-label="Close dialog">{@render cross(14)}</button>
    </header>
    <div class="dialog-tabs"><button>Compare Designs</button></div>
    <div class="dialog-body">
      <div class="legend"><span>Scope</span><hr /></div>
      <div class="choices">
        {#each ['Schematic', 'Sheet', 'Block'] as name}
          <label><input type="radio" name="scope" value={name} bind:group={scope} /><span>{name}</span></label>
        {/each}
      </div>
      <div class="designs">
        <div>
          <label for="design1">Design 1:</label>
          <div class="select"><select id="design1"><option>DVR_SYSTEM_BOARD</option></select></div>
        </div>
        <div>
          <label for="design2">Design 2:</label>
          <div class="select"><select id="design2"><option>DVR_SYSTEM_BOARD_REV</option></select></div>
        </div>
      </div>
      <div class="legend"><span>Options</span><hr /></div>
      <div class="choices">
        {#each options as option}
          <label><input type="checkbox" class="check" bind:checked={option.on} /><span class:focused={option.name === 'Circuit Topology'}>{option.name}</span></label>
        {/each}
      </div>
    </div>
    <div class="actions">
      <button class="ok">OK</button>
      <button>Cancel</button>
    </div>
  </div>
</div>

<style>
  :global(body) {
    margin: 0;
    background: #f0f0f0;
  }

  .window {
    position: relative;
    display: flex;
    flex-direction: column;
    height: 100vh;
    min-height: 980px;
    box-sizing: border-box;
    border: 1px solid #b02830;
    border-bottom: 0;
    overflow: hidden;
    background: #f0f0f0;
    color: #222;
    font-family: "Open Sans", "Segoe UI", sans-serif;
    font-size: 9px;
  }

  button {
    padding: 0;
    border: 0;
    background: none;
    color: inherit;
    font: inherit;
  }

  h1, h2 {
    margin: 0;
    font-size: 9px;
    font-weight: normal;
  }

  svg {
    flex: none;
    display: block;
  }

  /* title bar */
  .titlebar {
    display: grid;
    grid-template-columns: 200px 1fr 164px;
    align-items: center;
    height: 32px;
  }

  .titlebar h1 {
    text-align: center;
    font-size: 14px;
    color: #555;
  }

  .quick {
    display: flex;
    align-items: center;
    gap: 8px;
    padding-left: 4px;
  }

  .quick button {
    display: flex;
    align-items: center;
    gap: 5px;
  }

  .winbuttons {
    display: flex;
    justify-content: flex-end;
    gap: 33px;
    padding-right: 17px;
  }

  .tabs {
    display: flex;
    height: 17px;
    padding-left: 2px;
  }

  .tabs button {
    padding: 0 12px;
  }

  .tabs .file {
    width: 67px;
    margin-right: 3px;
    background: #d9181f;
    color: #fff;
  }

  .tabs .active {
    position: relative;
    height: 18px;
    padding: 0 10px;
    border: 1px solid #d0d0d0;
    border-bottom: 0;
    background: #fbfbfb;
    color: #b3151c;
  }

  .tab-tools {
    display: flex;
    align-items: center;
    gap: 7px;
    margin-left: auto;
    margin-bottom: 3px;
    padding-right: 6px;
  }

  /* ribbon */
  .ribbon {
    display: grid;
    grid-template-columns: 108px 228px 271px 321px 204px 105px 104px 109px;
    height: 99px;
    margin: 0 2px 0 1px;
    border: 1px solid #d0d0d0;
    border-left: 0;
    background: #fbfbfb;
  }

  .group {
    position: relative;
    margin: 2px 0;
    border-right: 1px solid #d0d0d0;
  }

  .group h2 {
    line-height: 15px;
    text-align: center;
  }

  .tools {
    display: flex;
    justify-content: center;
    height: 82px;
    padding-left: 3px;
  }

  .big {
    display: flex;
    flex-direction: column;
    align-items: center;
    width: 48px;
    height: 82px;
    padding-top: 4px;
    line-height: 8px;
    white-space: nowrap;
  }

  .big > svg:first-child {
    height: 38px;
    margin-bottom: 6px;
  }

  .big > .arrow {
    margin-top: 5px;
  }

  .arrow {
    color: #666;
  }

  .big span .arrow {
    display: inline-block;
    vertical-align: middle;
  }

  .big:disabled, .big:disabled .arrow {
    color: #b5b5b5;
  }

  .digits {
    font-size: 9px;
    fill: #aaa;
    stroke: none;
    text-anchor: middle;
  }

  .on {
    background: #eb9da0;
  }

  .smalls {
    display: flex;
    flex-direction: column;
    align-items: flex-start;
    padding-top: 1px;
  }

  .small {
    display: flex;
    align-items: center;
    gap: 6px;
    height: 25px;
    padding: 0 4px;
    white-space: nowrap;
  }

  .small svg {
    width: 15px;
  }

  .select-col {
    width: 76px;
  }

  .view-col {
    width: 70px;
  }

  .check {
    appearance: none;
    display: grid;
    place-items: center;
    width: 15px;
    height: 15px;
    margin: 0;
    box-sizing: border-box;
    border: 1px solid #c8c8c8;
    background: #fff;
  }

  .check:checked::before {
    content: "";
    width: 7px;
    height: 3px;
    margin-bottom: 3px;
    border: solid #555;
    border-width: 0 0 2px 2px;
    transform: rotate(-45deg);
  }

  .gallery {
    display: flex;
    width: 163px;
    height: 73px;
    margin: 4px 2px 0 0;
    border: 1px solid #e4e4e4;
  }

  .cells {
    flex: 1;
    display: grid;
    grid-template-columns: repeat(6, 1fr);
    grid-auto-rows: 24px;
  }

  .cells button {
    border: 1px solid #ccc;
    border-width: 0 1px 1px 0;
    background: #fff;
    color: #000;
    font-size: 13px;
    font-weight: bold;
    line-height: 22px;
  }

  .cells .current {
    background: #d9181f;
    color: #fff;
    box-shadow: inset 0 0 0 1px #fff;
  }

  .scrollers {
    display: grid;
    width: 15px;
  }

  .scrollers button {
    display: grid;
    place-items: center;
    border: 1px solid #e4e4e4;
    border-width: 0 0 1px 1px;
  }

  .launcher {
    position: absolute;
    right: 2px;
    bottom: 1px;
  }

  .dropdown {
    position: relative;
  }

  .menu {
    position: absolute;
    z-index: 2;
    top: 82px;
    left: 0;
    width: 114px;
    padding: 1px;
    box-sizing: border-box;
    border: 1px solid #ccc;
    background: #fff;
    box-shadow: 2px 2px 2px rgba(0, 0, 0, 0.2);
  }

  .menu button {
    display: flex;
    align-items: center;
    gap: 15px;
    width: 100%;
    height: 25px;
    padding-left: 6px;
  }

  .menu .hover {
    background: #f9d0d2;
  }

  .menu button:disabled {
    color: #bbb;
  }

  /* documents */
  main {
    flex: 1;
    display: flex;
    min-height: 0;
    padding-right: 2px;
  }

  .doc {
    flex: 1;
    display: flex;
    flex-direction: column;
    min-width: 0;
    margin: 3px 5px 0 0;
  }

  .doc:first-child {
    flex: 0 1 657px;
    margin-left: 1px;
    margin-right: 7px;
  }

  .doctabs {
    display: flex;
    align-items: center;
    justify-content: space-between;
    height: 24px;
    padding: 0 10px 0 4px;
  }

  .doctab {
    display: flex;
    align-items: center;
    gap: 6px;
    height: 24px;
    padding: 0 6px;
    box-sizing: border-box;
    border: 1px solid #d0d0d0;
    border-bottom: 0;
    background: #fff;
  }

  .doctab button {
    margin-left: 16px;
  }

  .doctab.active span {
    color: #b3151c;
  }

  .frame {
    flex: 1;
    display: flex;
    min-height: 0;
    padding: 2px 4px 4px;
    border: 1px solid #d4d4d4;
    background: #fff;
  }

  .canvas {
    flex: 1;
    display: flex;
    align-items: center;
    min-width: 0;
    padding-left: 12px;
    overflow: hidden;
    border: 1px solid #ececec;
    border-top: 1px solid #777;
    border-left: 1px solid #777;
    background: #fff;
  }

  .doc + .doc .canvas {
    padding-left: 14px;
  }

  .block-text {
    font-size: 11px;
    text-anchor: middle;
    fill: #66c;
  }

  /* browser panel */
  .browser {
    display: flex;
    flex-direction: column;
    width: 319px;
    padding-bottom: 3px;
  }

  .browser-head {
    display: flex;
    align-items: center;
    gap: 11px;
    height: 41px;
    padding-right: 4px;
  }

  .browser-head h2 {
    flex: 1;
    font-size: 22px;
  }

  .browser-body {
    flex: 1;
    display: flex;
    gap: 5px;
    min-height: 0;
  }

  .tree {
    display: flex;
    flex-direction: column;
    justify-content: space-between;
    width: 126px;
    background: #fff;
  }

  .tree ul {
    margin: 0;
    padding: 5px 0 0 20px;
    list-style: none;
    overflow: hidden;
  }

  .tree li {
    position: relative;
    display: flex;
    align-items: center;
    gap: 6px;
    height: 13px;
    padding-left: 15px;
    white-space: nowrap;
  }

  .tree li::before {
    content: "";
    position: absolute;
    top: 0;
    left: 5px;
    width: 9px;
    height: 6px;
    border: dotted #999;
    border-width: 0 0 1px 1px;
  }

  .tree .root {
    margin-left: -15px;
    padding: 0;
    gap: 5px;
    height: 14px;
  }

  .tree .root::before {
    display: none;
  }

  .hscroll {
    display: flex;
    height: 20px;
    margin-bottom: 3px;
    border: 1px solid #e4e4e4;
  }

  .hscroll button {
    display: grid;
    place-items: center;
    width: 21px;
  }

  .track {
    flex: 1;
    background: #e4e4e4;
  }

  .thumb {
    width: 74%;
    height: 100%;
    background: #fafafa;
  }

  .parts {
    flex: 1;
    display: flex;
    flex-direction: column;
    min-width: 0;
  }

  .part-tabs {
    display: flex;
    height: 17px;
    margin-top: 3px;
  }

  .part-tabs button {
    width: 60px;
  }

  .part-tabs .active {
    position: relative;
    height: 18px;
    border: 1px solid #d0d0d0;
    border-bottom: 0;
    background: #fbfbfb;
  }

  .part-body {
    flex: 1;
    display: flex;
    flex-direction: column;
    min-height: 0;
    padding: 0 2px 2px;
    border: 1px solid #d0d0d0;
    background: #fbfbfb;
  }

  .part-tools {
    display: flex;
    align-items: center;
    gap: 7px;
    height: 25px;
    padding: 0 0 3px 6px;
  }

  .part-tools label {
    display: flex;
    align-items: center;
    gap: 4px;
    white-space: nowrap;
  }

  .grid {
    flex: 1;
    display: flex;
    min-height: 0;
    border: 1px solid #d0d0d0;
    border-bottom: 0;
  }

  .grid-clip {
    flex: 1;
    min-width: 0;
    overflow: hidden;
  }

  table {
    width: 100%;
    table-layout: fixed;
    border-collapse: collapse;
  }

  th, td {
    height: 19px;
    padding: 0 0 0 4px;
    box-sizing: border-box;
    border: 1px solid #d4d4d4;
    border-width: 0 1px 1px 0;
    overflow: hidden;
    line-height: 12px;
    text-align: left;
    font-weight: normal;
    background: #fff;
  }

  th {
    height: 21px;
    background: #f0f0f0;
  }

  th:nth-child(1) { width: 24px; }
  th:nth-child(2) { width: 41px; }
  th:nth-child(3) { width: 82px; }

  td:last-child, th:last-child {
    border-right: 0;
  }

  .alt td {
    background: #fafafa;
  }

  .num, .alt .num {
    padding: 0;
    text-align: center;
    background: #f0f0f0;
  }

  .num svg {
    margin: 0 auto;
  }

  .filter td {
    height: 20px;
    color: #777;
  }

  .filter div {
    display: flex;
    align-items: center;
    justify-content: space-between;
    padding-right: 4px;
  }

  .vscroll {
    display: flex;
    flex-direction: column;
    align-items: center;
    gap: 7px;
    width: 21px;
    padding: 8px 0;
    box-sizing: border-box;
    background: #f0f0f0;
  }

  .vthumb {
    width: 19px;
    height: 420px;
    margin-bottom: auto;
    background: #cbcbcb;
  }

  .gscroll {
    display: flex;
    align-items: center;
    gap: 8px;
    height: 20px;
    padding: 0 28px 0 7px;
    background: #f0f0f0;
  }

  .gtrack {
    flex: 1;
    height: 100%;
  }

  .gthumb {
    width: 64%;
    height: 100%;
    background: #cbcbcb;
  }

  .side {
    width: 49px;
    margin-left: 2px;
    padding-top: 1px;
    background: #3b3b3b;
  }

  .side button {
    display: flex;
    flex-direction: column;
    align-items: center;
    justify-content: center;
    gap: 5px;
    width: 100%;
    height: 50px;
    color: #fff;
    font-weight: 600;
    line-height: 12px;
  }

  .side .active {
    background: #f00000;
    font-weight: bold;
  }

  /* status bar */
  footer {
    display: flex;
    align-items: center;
    height: 29px;
    padding: 0 5px 0 2px;
    background: #d9181f;
    color: #fff;
  }

  .ready {
    flex: 1;
  }

  .status {
    display: flex;
    align-items: center;
    gap: 4px;
  }

  .page { width: 146px; }
  .coords { width: 122px; }
  .abs { width: 144px; }
  .unit { width: 46px; }

  .grip {
    margin: 10px 0 0 12px;
  }

  /* dialog */
  .dialog {
    position: absolute;
    z-index: 3;
    top: 297px;
    right: 61px;
    display: flex;
    flex-direction: column;
    width: 695px;
    height: 665px;
    border: 1px solid #a8141c;
    background: #fbfbfb;
    font-size: 11px;
  }

  .dialog header {
    display: flex;
    align-items: center;
    gap: 11px;
    height: 39px;
    padding: 0 14px 0 7px;
    background: #f0f0f0;
  }

  .dialog header h2 {
    flex: 1;
    font-size: 17px;
    color: #555;
  }

  .dialog-tabs {
    padding: 0 3px;
    height: 19px;
    background: #f0f0f0;
  }

  .dialog-tabs button {
    position: relative;
    height: 20px;
    padding: 0 8px;
    border: 1px solid #c8c8c8;
    border-bottom: 0;
    background: #fff;
  }

  .dialog-body {
    flex: 1;
    display: flex;
    flex-direction: column;
    margin: 0 3px;
    padding: 11px 33px 44px 13px;
    border: 1px solid #c8c8c8;
  }

  .legend {
    display: flex;
    align-items: center;
    height: 17px;
  }

  .legend span {
    width: 50px;
  }

  .legend hr {
    flex: 1;
    margin: 0;
    border: 0;
    border-top: 1px solid #ccc;
  }

  .choices {
    display: flex;
    flex-direction: column;
    gap: 6px;
    padding: 14px 0 0 20px;
  }

  .choices label {
    display: flex;
    align-items: center;
    gap: 1px;
    height: 18px;
  }

  .choices input {
    appearance: none;
    display: grid;
    place-items: center;
    width: 19px;
    height: 19px;
    margin: 0;
    box-sizing: border-box;
    border: 1px solid #c8c8c8;
    background: #fff;
  }

  .choices input[type="radio"] {
    border-radius: 50%;
  }

  input[type="radio"]:checked::before {
    content: "";
    width: 7px;
    height: 7px;
    border-radius: 50%;
    background: #c4c4c4;
  }

  .choices span {
    padding: 0 1px;
    border: 1px solid transparent;
    line-height: 13px;
  }

  .choices .focused {
    border: 1px dotted #333;
  }

  .designs {
    flex: 1;
    display: grid;
    grid-template-columns: 1fr 1fr;
    gap: 31px;
    padding: 21px 0 0 19px;
  }

  .designs label {
    display: block;
    line-height: 16px;
    margin-bottom: 5px;
  }

  .select {
    position: relative;
  }

  .select::after {
    content: "";
    position: absolute;
    top: 8px;
    right: 11px;
    border: 4px solid transparent;
    border-top: 5px solid #666;
    border-bottom: 0;
  }

  select {
    appearance: none;
    width: 100%;
    height: 22px;
    padding: 0 3px;
    border: 1px solid #c8c8c8;
    border-radius: 0;
    background: #fff;
    color: #222;
    font: inherit;
  }

  .actions {
    display: flex;
    justify-content: flex-end;
    gap: 10px;
    padding: 10px 12px 13px;
  }

  .actions button {
    width: 82px;
    height: 21px;
    border: 1px solid #ccc;
    background: #fff;
  }

  .actions .ok {
    border-color: #b3303a;
  }
</style>
